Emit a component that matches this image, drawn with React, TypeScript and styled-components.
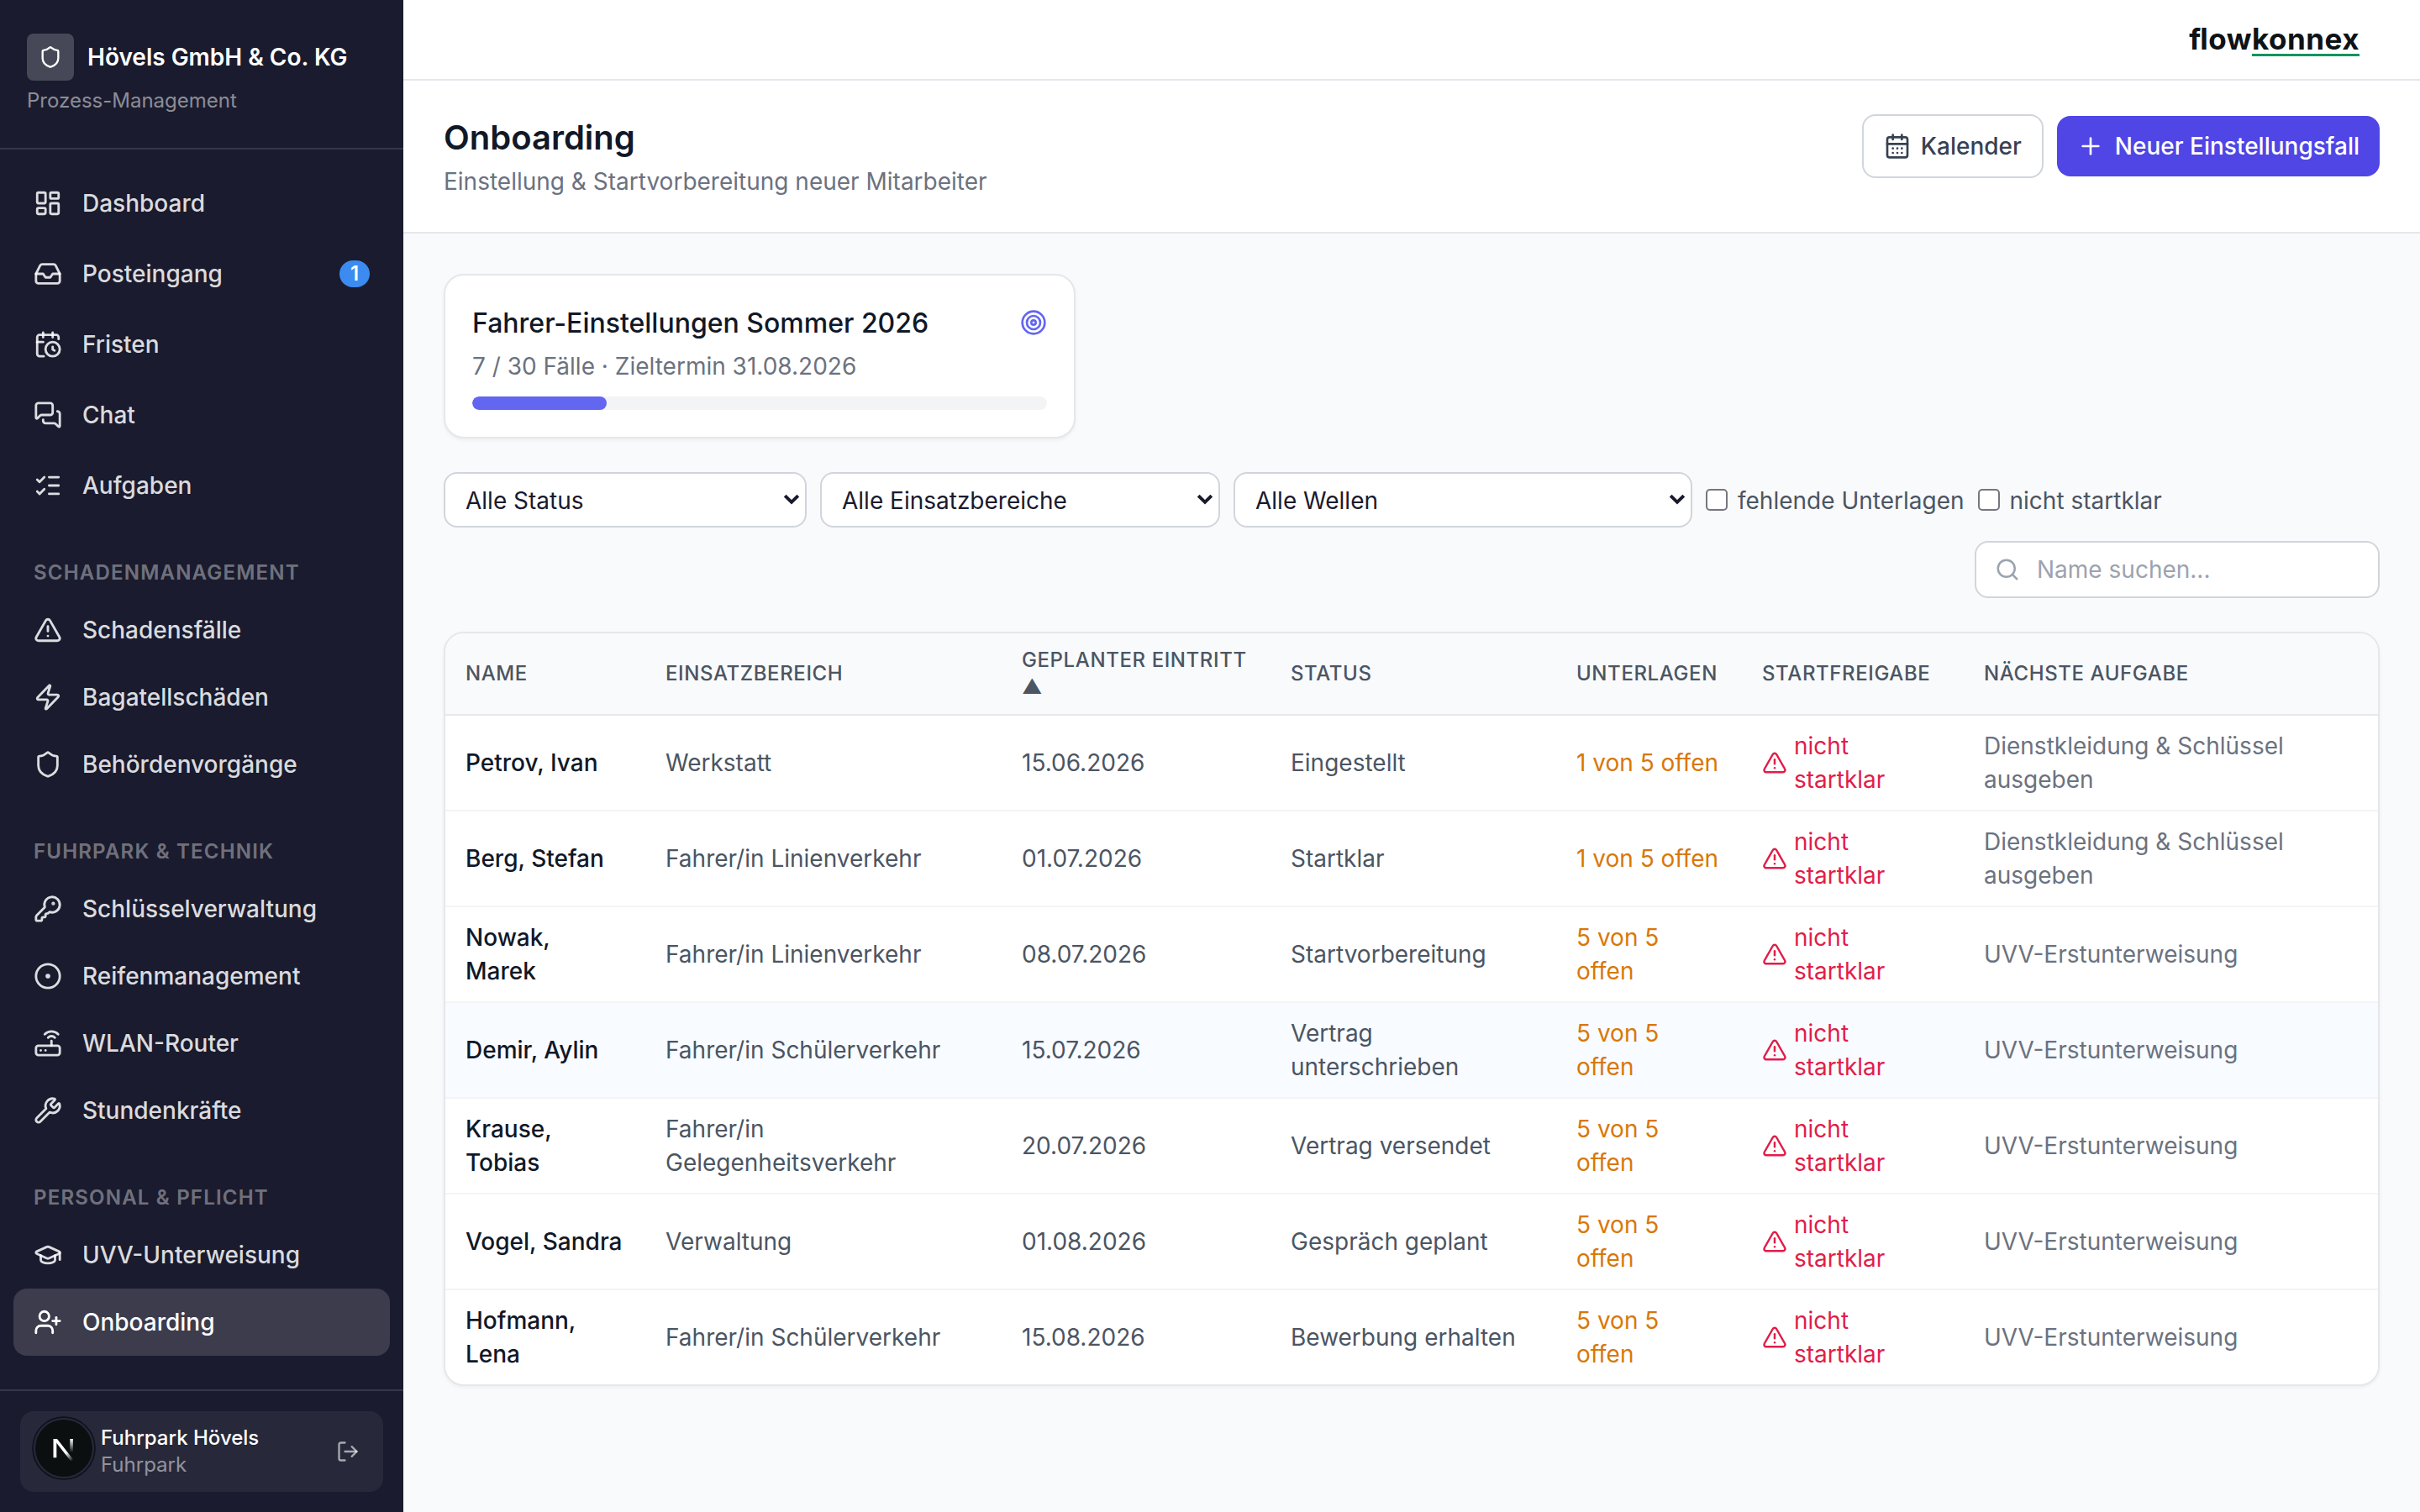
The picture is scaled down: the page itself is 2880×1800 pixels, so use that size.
import React from 'react'
import styled, { createGlobalStyle, css } from 'styled-components'
import {
	LayoutDashboard,
	Inbox,
	CalendarClock,
	MessagesSquare,
	ListChecks,
	TriangleAlert,
	Zap,
	Shield,
	KeyRound,
	CircleDot,
	Router,
	Wrench,
	GraduationCap,
	UserPlus,
	LogOut,
	CalendarDays,
	Plus,
	Target,
	Search,
	type LucideIcon,
} from 'lucide-react'

const colors = {
	sidebar: '#1a1b2e',
	primary: '#4f46e5',
	primaryLight: '#6366f1',
	pageBackground: '#f9fafb',
	primaryBorder: '#e5e7eb',
	inputBorder: '#d1d5db',
	rowBorder: '#f3f4f6',
	text: '#111827',
	inputText: '#1a1a2e',
	controlText: '#374151',
	cellText: '#4b5563',
	mutedText: '#6b7280',
	placeholder: '#9ca3af',
	warning: '#d97706',
	danger: '#e11d48',
}

type TNavItem = {
	label: string
	icon: LucideIcon
	badge?: number
	active?: boolean
}

type TNavSection = {
	title: string
	items: TNavItem[]
}

type TCase = {
	name: string
	area: string
	date: string
	status: string
	documents: string
	task: string
	hovered?: boolean
}

const mainNav: TNavItem[] = [
	{ label: 'Dashboard', icon: LayoutDashboard },
	{ label: 'Posteingang', icon: Inbox, badge: 1 },
	{ label: 'Fristen', icon: CalendarClock },
	{ label: 'Chat', icon: MessagesSquare },
	{ label: 'Aufgaben', icon: ListChecks },
]

const sections: TNavSection[] = [
	{
		title: 'Schadenmanagement',
		items: [
			{ label: 'Schadensfälle', icon: TriangleAlert },
			{ label: 'Bagatellschäden', icon: Zap },
			{ label: 'Behördenvorgänge', icon: Shield },
		],
	},
	{
		title: 'Fuhrpark & Technik',
		items: [
			{ label: 'Schlüsselverwaltung', icon: KeyRound },
			{ label: 'Reifenmanagement', icon: CircleDot },
			{ label: 'WLAN-Router', icon: Router },
			{ label: 'Stundenkräfte', icon: Wrench },
		],
	},
	{
		title: 'Personal & Pflicht',
		items: [
			{ label: 'UVV-Unterweisung', icon: GraduationCap },
			{ label: 'Onboarding', icon: UserPlus, active: true },
		],
	},
]

const columns = [
	{ title: 'Name', width: 238 },
	{ title: 'Einsatzbereich', width: 424 },
	{ title: 'Geplanter Eintritt ▲', width: 320 },
	{ title: 'Status', width: 340 },
	{ title: 'Unterlagen', width: 221 },
	{ title: 'Startfreigabe', width: 264 },
	{ title: 'Nächste Aufgabe', width: 493 },
]

const cases: TCase[] = [
	{ name: 'Petrov, Ivan', area: 'Werkstatt', date: '15.06.2026', status: 'Eingestellt', documents: '1 von 5 offen', task: 'Dienstkleidung & Schlüssel ausgeben' },
	{ name: 'Berg, Stefan', area: 'Fahrer/in Linienverkehr', date: '01.07.2026', status: 'Startklar', documents: '1 von 5 offen', task: 'Dienstkleidung & Schlüssel ausgeben' },
	{ name: 'Nowak, Marek', area: 'Fahrer/in Linienverkehr', date: '08.07.2026', status: 'Startvorbereitung', documents: '5 von 5 offen', task: 'UVV-Erstunterweisung' },
	{ name: 'Demir, Aylin', area: 'Fahrer/in Schülerverkehr', date: '15.07.2026', status: 'Vertrag unterschrieben', documents: '5 von 5 offen', task: 'UVV-Erstunterweisung', hovered: true },
	{ name: 'Krause, Tobias', area: 'Fahrer/in Gelegenheitsverkehr', date: '20.07.2026', status: 'Vertrag versendet', documents: '5 von 5 offen', task: 'UVV-Erstunterweisung' },
	{ name: 'Vogel, Sandra', area: 'Verwaltung', date: '01.08.2026', status: 'Gespräch geplant', documents: '5 von 5 offen', task: 'UVV-Erstunterweisung' },
	{ name: 'Hofmann, Lena', area: 'Fahrer/in Schülerverkehr', date: '15.08.2026', status: 'Bewerbung erhalten', documents: '5 von 5 offen', task: 'UVV-Erstunterweisung' },
]

function NavLink({ label, icon: Icon, badge, active }: TNavItem) {
	return (
		<NavItem $active={active}>
			<Icon size={34} />
			{label}
			{badge && <Badge>{badge}</Badge>}
		</NavItem>
	)
}

function FilterSelect({ label, width }: { label: string; width: number }) {
	return (
		<SelectWrapper $width={width}>
			<Select defaultValue={label}>
				<option>{label}</option>
			</Select>
			<SelectArrow viewBox='0 0 20 14'>
				<path d='M2.2 3.1 L10 10.8 L17.8 3.1' />
			</SelectArrow>
		</SelectWrapper>
	)
}

function DevBadge() {
	return (
		<DevBadgeRing viewBox='0 0 76 76'>
			<defs>
				<linearGradient id='diagonal' x1='41' y1='43' x2='48' y2='53' gradientUnits='userSpaceOnUse'>
					<stop stopColor='#fff' />
					<stop offset='1' stopColor='#fff' stopOpacity='0' />
				</linearGradient>
				<linearGradient id='stem' x1='47' y1='27' x2='47' y2='43' gradientUnits='userSpaceOnUse'>
					<stop stopColor='#fff' />
					<stop offset='1' stopColor='#fff' stopOpacity='0' />
				</linearGradient>
			</defs>
			<circle cx='38' cy='38' r='37' fill='#26273a' stroke='#0d0f16' strokeWidth='1.5' />
			<circle cx='38' cy='38' r='34' fill='#0c0f10' />
			<rect x='45.3' y='27' width='3.6' height='16' fill='url(#stem)' />
			<rect x='25.5' y='27' width='3.8' height='22.3' fill='#fff' />
			<path d='M25.5 27 H30 L49.3 51.8 L46.6 54 Z' fill='url(#diagonal)' />
		</DevBadgeRing>
	)
}

function Sidebar() {
	return (
		<Aside>
			<Brand>
				<BrandRow>
					<BrandIcon>
						<Shield size={28} />
					</BrandIcon>
					Hövels GmbH &amp; Co. KG
				</BrandRow>
				<BrandSubtitle>Prozess-Management</BrandSubtitle>
			</Brand>
			<Nav>
				<NavGroup $gap={4}>
					{mainNav.map(item => (
						<NavLink key={item.label} {...item} />
					))}
				</NavGroup>
				{sections.map(section => (
					<NavGroup key={section.title}>
						<SectionTitle>{section.title}</SectionTitle>
						{section.items.map(item => (
							<NavLink key={item.label} {...item} />
						))}
					</NavGroup>
				))}
			</Nav>
			<AsideFooter>
				<UserCard>
					<DevBadge />
					<UserText>
						<UserName>Fuhrpark Hövels</UserName>
						<UserRole>Fuhrpark</UserRole>
					</UserText>
					<LogOut size={28} />
				</UserCard>
			</AsideFooter>
		</Aside>
	)
}

function CasesTable() {
	return (
		<TableCard>
			<Table>
				<colgroup>
					{columns.map(({ title, width }) => (
						<Col key={title} $width={width} />
					))}
				</colgroup>
				<thead>
					<tr>
						{columns.map(({ title }) => (
							<Th key={title}>{title}</Th>
						))}
					</tr>
				</thead>
				<tbody>
					{cases.map(item => (
						<Tr key={item.name} $hovered={item.hovered}>
							<Td $color={colors.text} $weight={500}>{item.name}</Td>
							<Td>{item.area}</Td>
							<Td>{item.date}</Td>
							<Td>{item.status}</Td>
							<Td $color={colors.warning}>{item.documents}</Td>
							<Td $color={colors.danger}>
								<Clearance>
									<TriangleAlert size={30} />
									<span>nicht startklar</span>
								</Clearance>
							</Td>
							<Td $color={colors.mutedText}>{item.task}</Td>
						</Tr>
					))}
				</tbody>
			</Table>
		</TableCard>
	)
}

function App() {
	return (
		<>
			<GlobalStyle />
			<Layout>
				<Sidebar />
				<Main>
					<TopBar>
						<Logo>
							<LogoLigature>f</LogoLigature>low<LogoAccent>konnex</LogoAccent>
						</Logo>
					</TopBar>
					<PageHeader>
						<div>
							<Title>Onboarding</Title>
							<Subtitle>Einstellung &amp; Startvorbereitung neuer Mitarbeiter</Subtitle>
						</div>
						<Actions>
							<Button>
								<CalendarDays size={32} />
								Kalender
							</Button>
							<Button $primary>
								<Plus size={32} />
								Neuer Einstellungsfall
							</Button>
						</Actions>
					</PageHeader>
					<Content>
						<WaveCard>
							<WaveTitle>
								<span>Fahrer-Einstellungen Sommer 2026</span>
								<Target size={32} />
							</WaveTitle>
							<WaveInfo>7 / 30 Fälle · Zieltermin 31.08.2026</WaveInfo>
							<Progress>
								<ProgressValue style={{ width: `${(7 / 30) * 100}%` }} />
							</Progress>
						</WaveCard>
						<Filters>
							<FilterSelect label='Alle Status' width={432} />
							<FilterSelect label='Alle Einsatzbereiche' width={476} />
							<FilterSelect label='Alle Wellen' width={546} />
							<CheckLabel>
								<Checkbox type='checkbox' />
								<span>fehlende Unterlagen</span>
							</CheckLabel>
							<CheckLabel>
								<Checkbox type='checkbox' />
								<span>nicht startklar</span>
							</CheckLabel>
							<SearchField>
								<Search size={30} />
								<SearchInput placeholder='Name suchen...' />
							</SearchField>
						</Filters>
						<CasesTable />
					</Content>
				</Main>
			</Layout>
		</>
	)
}

export default App

const GlobalStyle = createGlobalStyle`
	*, *::before, *::after {
		box-sizing: border-box;
	}
	body {
		margin: 0;
		font-family: Inter, 'Liberation Sans', sans-serif;
		font-size: 28px;
		line-height: 40px;
		color: ${colors.text};
		background-color: ${colors.pageBackground};
	}
	h1, p {
		margin: 0;
	}
	input, select, button {
		font: inherit;
	}
	svg {
		flex-shrink: 0;
	}
`

const Layout = styled.div`
	display: flex;
	height: 1800px;
	overflow: hidden;
`

const Aside = styled.aside`
	display: flex;
	flex-direction: column;
	flex-shrink: 0;
	width: 480px;
	background-color: ${colors.sidebar};
	color: #fff;
`
const Brand = styled.div`
	padding: 40px 32px;
	border-bottom: 2px solid rgba(255, 255, 255, 0.12);
`
const BrandRow = styled.div`
	display: flex;
	align-items: center;
	gap: 16px;
	font-weight: 600;
`
const BrandIcon = styled.div`
	display: flex;
	align-items: center;
	justify-content: center;
	width: 56px;
	height: 56px;
	border-radius: 8px;
	background-color: rgba(255, 255, 255, 0.2);
`
const BrandSubtitle = styled.p`
	margin-top: 8px;
	font-size: 24px;
	line-height: 32px;
	color: rgba(255, 255, 255, 0.5);
`
const Nav = styled.nav`
	display: flex;
	flex: 1;
	flex-direction: column;
	gap: 32px;
	min-height: 0;
	padding: 24px 16px 0;
`
const NavGroup = styled.div<{ $gap?: number }>`
	display: flex;
	flex-direction: column;
	gap: ${({ $gap = 0 }) => $gap}px;
`
const NavItem = styled.a<{ $active?: boolean }>`
	display: flex;
	align-items: center;
	gap: 24px;
	height: 80px;
	padding: 0 24px;
	border-radius: 16px;
	font-weight: 500;
	color: rgba(255, 255, 255, 0.85);
	${({ $active }) =>
		$active &&
		css`
			color: #fff;
			background-color: rgba(255, 255, 255, 0.15);
		`}
`
const Badge = styled.span`
	min-width: 36px;
	height: 32px;
	margin-left: auto;
	border-radius: 16px;
	background-color: #3b8bf0;
	color: #fff;
	font-size: 24px;
	font-weight: 600;
	line-height: 32px;
	text-align: center;
`
const SectionTitle = styled.p`
	padding: 16px 24px 12px;
	font-size: 24px;
	font-weight: 600;
	line-height: 32px;
	letter-spacing: 1.2px;
	text-transform: uppercase;
	color: rgba(255, 255, 255, 0.4);
`
const AsideFooter = styled.div`
	padding: 24px;
	border-top: 2px solid rgba(255, 255, 255, 0.12);
`
const UserCard = styled.div`
	display: flex;
	align-items: center;
	height: 96px;
	padding: 0 28px 0 14px;
	border-radius: 16px;
	background-color: rgba(255, 255, 255, 0.06);
	color: rgba(255, 255, 255, 0.6);
`
const DevBadgeRing = styled.svg`
	width: 76px;
	height: 76px;
	margin-top: -8px;
`
const UserText = styled.div`
	flex: 1;
	margin-left: 6px;
	font-size: 24px;
	line-height: 32px;
`
const UserName = styled.p`
	font-weight: 500;
	color: #fff;
`
const UserRole = styled.p`
	color: rgba(255, 255, 255, 0.5);
`

const Main = styled.main`
	display: flex;
	flex: 1;
	flex-direction: column;
	min-width: 0;
`
const TopBar = styled.header`
	display: flex;
	align-items: center;
	justify-content: flex-end;
	height: 96px;
	padding: 0 72px 2px 0;
	background-color: #fff;
	border-bottom: 2px solid ${colors.primaryBorder};
`
const Logo = styled.div`
	font-size: 35px;
	font-weight: 700;
	line-height: 40px;
	letter-spacing: 0.5px;
	color: #0f1216;
`
const LogoLigature = styled.span`
	letter-spacing: -1px;
`
const LogoAccent = styled.span`
	text-decoration: underline;
	text-decoration-color: #12945f;
	text-decoration-thickness: 3px;
	text-underline-offset: 4.5px;
`
const PageHeader = styled.div`
	display: flex;
	justify-content: space-between;
	height: 182px;
	padding: 40px 48px 0;
	background-color: #fff;
	border-bottom: 2px solid ${colors.primaryBorder};
`
const Title = styled.h1`
	font-size: 40px;
	font-weight: 600;
	line-height: 56px;
`
const Subtitle = styled.p`
	margin-top: 4px;
	color: ${colors.mutedText};
`
const Actions = styled.div`
	display: flex;
	align-items: center;
	align-self: flex-start;
	gap: 16px;
`
const Button = styled.button<{ $primary?: boolean }>`
	display: flex;
	align-items: center;
	gap: 12px;
	height: 76px;
	padding: 0 24px;
	border: 2px solid ${colors.inputBorder};
	border-radius: 16px;
	background-color: #fff;
	color: ${colors.controlText};
	font-weight: 500;
	${({ $primary }) =>
		$primary &&
		css`
			gap: 13px;
			height: 72px;
			border: none;
			background-color: ${colors.primary};
			color: #fff;
		`}
`
const Content = styled.div`
	display: flex;
	flex-direction: column;
	gap: 40px;
	padding: 48px;
`
const WaveCard = styled.section`
	width: 752px;
	padding: 32px;
	background-color: #fff;
	border: 2px solid ${colors.primaryBorder};
	border-radius: 24px;
	box-shadow: 0 2px 4px rgba(0, 0, 0, 0.05);
`
const WaveTitle = styled.div`
	display: flex;
	align-items: center;
	justify-content: space-between;
	height: 48px;
	font-size: 32px;
	font-weight: 500;
	line-height: 48px;

	span {
		padding-top: 2px;
	}
	svg {
		color: ${colors.primaryLight};
	}
`
const WaveInfo = styled.p`
	margin-top: 8px;
	color: ${colors.mutedText};
`
const Progress = styled.div`
	height: 16px;
	margin-top: 16px;
	overflow: hidden;
	border-radius: 8px;
	background-color: #f3f4f6;
`
const ProgressValue = styled.div`
	height: 100%;
	border-radius: 8px;
	background-color: ${colors.primaryLight};
`

const Filters = styled.div`
	display: flex;
	flex-wrap: wrap;
	align-items: center;
	gap: 16px;
`
const SelectWrapper = styled.div<{ $width: number }>`
	position: relative;
	width: ${({ $width }) => $width}px;
	height: 66px;
`
const Select = styled.select`
	width: 100%;
	height: 100%;
	padding: 2px 24px 0;
	appearance: none;
	border: 2px solid ${colors.inputBorder};
	border-radius: 16px;
	background-color: #fff;
	color: ${colors.inputText};
`
const SelectArrow = styled.svg`
	position: absolute;
	top: 25px;
	right: 8px;
	width: 20px;
	height: 14px;
	fill: none;
	stroke: ${colors.inputText};
	stroke-width: 4;
	pointer-events: none;
`
const CheckLabel = styled.label`
	display: flex;
	align-items: center;
	gap: 12px;
	color: ${colors.cellText};

	span {
		padding-top: 2px;
	}
`
const Checkbox = styled.input`
	width: 26px;
	height: 26px;
	margin: 0;
	appearance: none;
	border: 2px solid #767680;
	border-radius: 5px;
	background-color: #fff;
`
const SearchField = styled.div`
	display: flex;
	align-items: center;
	gap: 20px;
	width: 482px;
	height: 68px;
	margin-left: auto;
	padding: 0 22px;
	border: 2px solid ${colors.inputBorder};
	border-radius: 16px;
	background-color: #fff;
	color: ${colors.placeholder};
`
const SearchInput = styled.input`
	flex: 1;
	min-width: 0;
	padding: 0;
	border: none;
	outline: none;
	background: none;

	&::placeholder {
		color: ${colors.placeholder};
	}
`

const TableCard = styled.div`
	overflow: hidden;
	background-color: #fff;
	border: 2px solid ${colors.primaryBorder};
	border-radius: 24px;
	box-shadow: 0 2px 4px rgba(0, 0, 0, 0.05);
`
const Table = styled.table`
	width: 100%;
	table-layout: fixed;
	border-spacing: 0;
`
const Col = styled.col<{ $width: number }>`
	width: ${({ $width }) => $width}px;
`
const Th = styled.th`
	height: 98px;
	padding: 16px 24px;
	border-bottom: 2px solid ${colors.primaryBorder};
	background-color: ${colors.pageBackground};
	color: ${colors.cellText};
	font-size: 24px;
	font-weight: 500;
	line-height: 32px;
	letter-spacing: 0.6px;
	text-align: left;
	text-transform: uppercase;
`
const Tr = styled.tr<{ $hovered?: boolean }>`
	background-color: ${({ $hovered }) => ($hovered ? '#f8fbff' : '#fff')};

	&:last-child td {
		height: 112px;
		border-bottom: none;
	}
`
const Td = styled.td<{ $color?: string; $weight?: number }>`
	height: 114px;
	padding: 16px 24px;
	border-bottom: 2px solid ${colors.rowBorder};
	color: ${({ $color = colors.cellText }) => $color};
	font-weight: ${({ $weight = 400 }) => $weight};
`
const Clearance = styled.div`
	display: flex;
	align-items: center;
	gap: 8px;
`
